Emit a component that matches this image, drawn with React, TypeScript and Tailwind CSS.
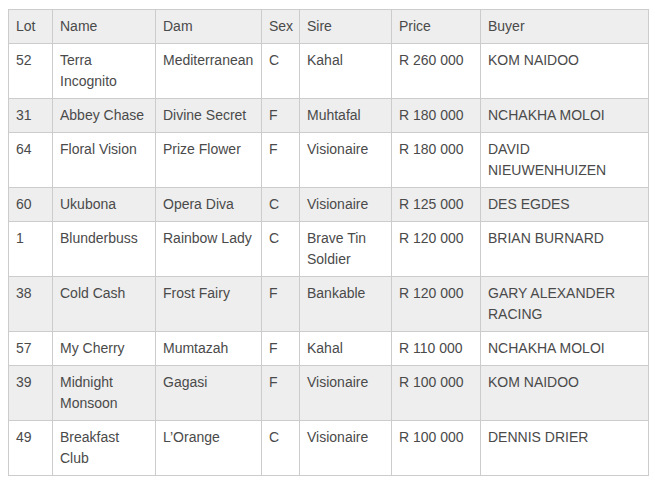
const ROWS = [
  { lot: '52', name: 'Terra Incognito', dam: 'Mediterranean', sex: 'C', sire: 'Kahal', price: 'R 260 000', buyer: 'KOM NAIDOO' },
  { lot: '31', name: 'Abbey Chase', dam: 'Divine Secret', sex: 'F', sire: 'Muhtafal', price: 'R 180 000', buyer: 'NCHAKHA MOLOI' },
  { lot: '64', name: 'Floral Vision', dam: 'Prize Flower', sex: 'F', sire: 'Visionaire', price: 'R 180 000', buyer: 'DAVID NIEUWENHUIZEN' },
  { lot: '60', name: 'Ukubona', dam: 'Opera Diva', sex: 'C', sire: 'Visionaire', price: 'R 125 000', buyer: 'DES EGDES' },
  { lot: '1', name: 'Blunderbuss', dam: 'Rainbow Lady', sex: 'C', sire: 'Brave Tin Soldier', price: 'R 120 000', buyer: 'BRIAN BURNARD' },
  { lot: '38', name: 'Cold Cash', dam: 'Frost Fairy', sex: 'F', sire: 'Bankable', price: 'R 120 000', buyer: 'GARY ALEXANDER RACING' },
  { lot: '57', name: 'My Cherry', dam: 'Mumtazah', sex: 'F', sire: 'Kahal', price: 'R 110 000', buyer: 'NCHAKHA MOLOI' },
  { lot: '39', name: 'Midnight Monsoon', dam: 'Gagasi', sex: 'F', sire: 'Visionaire', price: 'R 100 000', buyer: 'KOM NAIDOO' },
  { lot: '49', name: 'Breakfast Club', dam: 'L’Orange', sex: 'C', sire: 'Visionaire', price: 'R 100 000', buyer: 'DENNIS DRIER' },
];

const HEADERS = ['Lot', 'Name', 'Dam', 'Sex', 'Sire', 'Price', 'Buyer'];
const WIDTHS = [44, 103, 106, 38, 92, 89, 168];

const cell = 'border border-[#cccccc] px-[7px] py-[6px] align-top text-left font-normal';

export default function App() {
  return (
    <div className="bg-white pl-[8px] pt-[9px] font-['Liberation_Sans'] text-[14px] leading-[21px] text-[#4a4a4a]">
      <table className="w-[640px] table-fixed border-collapse">
        <colgroup>
          {WIDTHS.map((w, i) => (
            <col key={i} style={{ width: w }} />
          ))}
        </colgroup>
        <thead>
          <tr className="bg-[#eeeeee]">
            {HEADERS.map((h) => (
              <th key={h} className={cell}>
                {h}
              </th>
            ))}
          </tr>
        </thead>
        <tbody>
          {ROWS.map((r, i) => (
            <tr key={r.lot} className={i % 2 === 1 ? 'bg-[#eeeeee]' : 'bg-white'}>
              <td className={cell}>{r.lot}</td>
              <td className={cell}>{r.name}</td>
              <td className={cell}>{r.dam}</td>
              <td className={cell}>{r.sex}</td>
              <td className={cell}>{r.sire}</td>
              <td className={cell}>{r.price}</td>
              <td className={cell}>{r.buyer}</td>
            </tr>
          ))}
        </tbody>
      </table>
    </div>
  );
}
